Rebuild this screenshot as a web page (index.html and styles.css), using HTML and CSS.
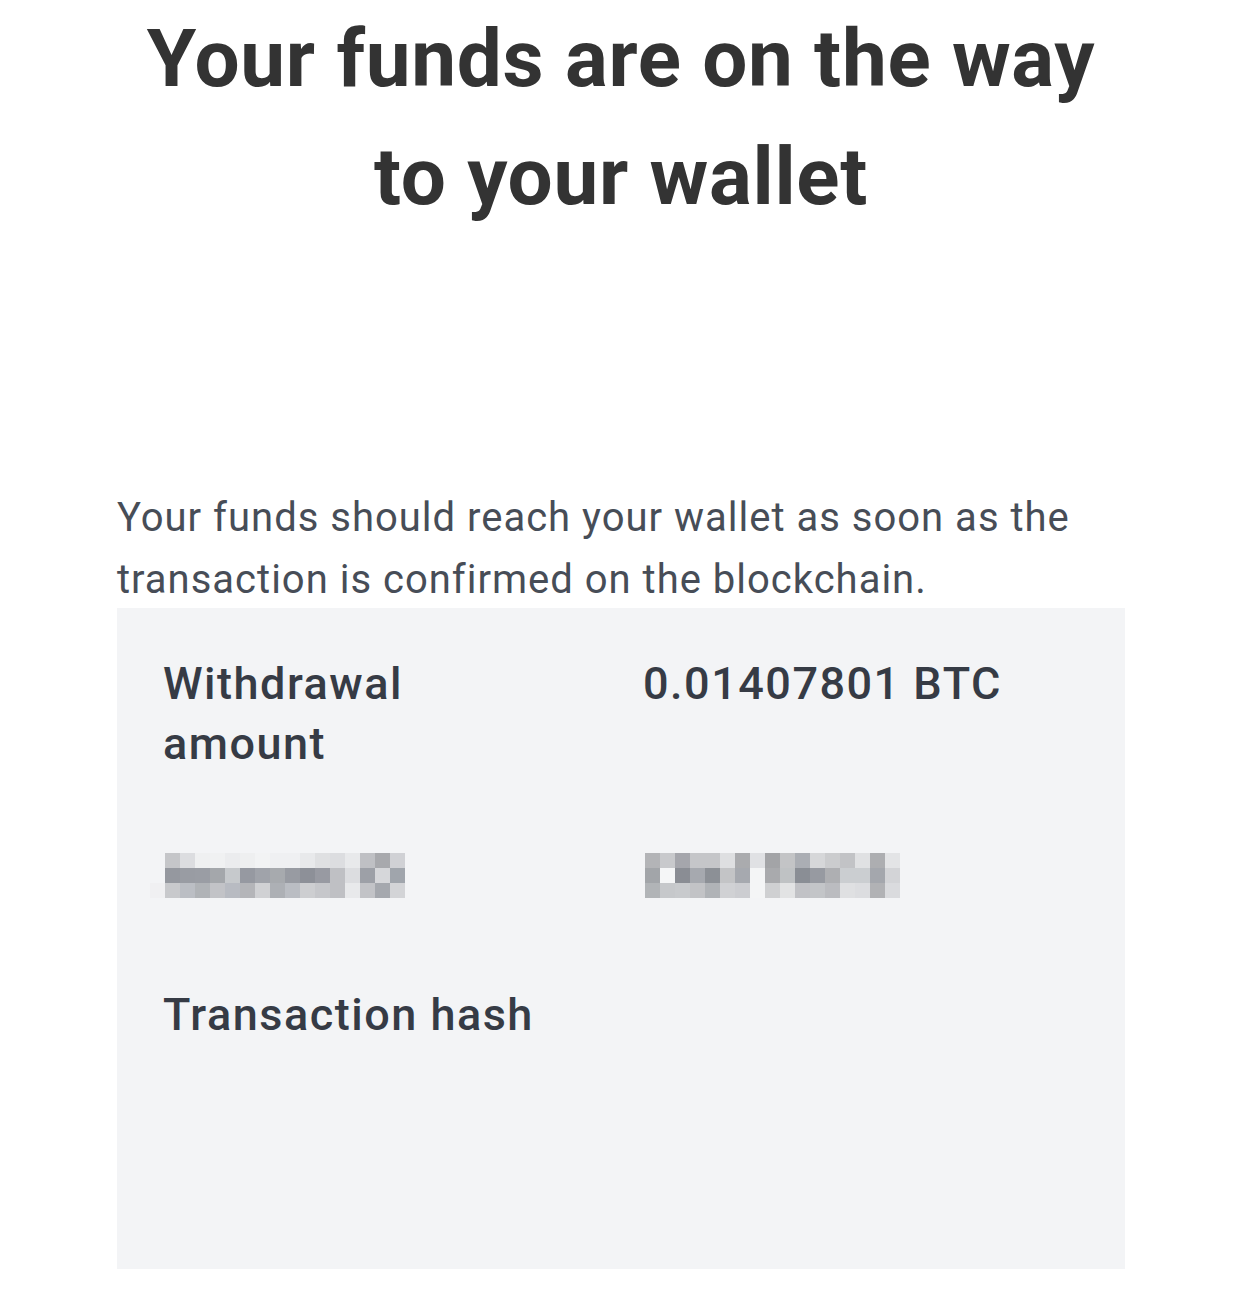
FILE: index.html
```html
<!DOCTYPE html>
<html lang="en">
<head>
    <meta charset="UTF-8">
    <meta name="viewport" content="width=device-width, initial-scale=1.0">
    <title>Withdrawal submitted</title>
    <link rel="stylesheet" href="styles.css">
</head>
<body>

    <div class="container">
        <h1 class="title">Your funds are on the way to your wallet</h1>

        <p class="intro">Your funds should reach your wallet as soon as the transaction is confirmed on the blockchain.</p>

        <div class="details">
            <div class="row">
                <div class="label">Withdrawal amount</div>
                <div class="value">0.01407801 BTC</div>
            </div>
            <div class="row">
                <div class="label"><div class="pixels pixels-left" id="blurLabel"></div></div>
                <div class="value"><div class="pixels" id="blurValue"></div></div>
            </div>
            <div class="row">
                <div class="label">Transaction hash</div>
                <div class="value"></div>
            </div>
        </div>
    </div>

    <script>
        // Blurred (pixelated) address, one colour per 15px cell
        const blurLabel = [
            ['', 'c5c6c9', 'dcdde0', 'eff0f1', 'f0f1f2', 'ebecee', 'eeeff0', 'f2f3f4', 'eff0f2', 'eff0f2', 'e8e9eb', 'dfe0e2', 'dcdde0', 'e8e9eb', 'bfc0c4', 'a8a9ad', 'd0d1d5'],
            ['', '95989f', '999ca3', '9a9da4', 'a4a7ab', 'c6c9cc', '9699a1', 'a0a3aa', 'a7aaae', '989ba2', '8d9098', '989aa2', 'bfc0c4', 'dcdde0', '9da0a7', 'd6d7da', 'a0a5ac'],
            ['f0f0f2', 'c8c9cc', 'bbbec4', 'b0b3b7', 'c2c3c7', 'b8bbc2', 'b4b5b9', 'd0d1d4', 'adb0b5', 'babdc3', 'cdced1', 'c6c7cb', 'bfc0c4', 'e8e9eb', 'c2c3c7', 'a5a8ae', 'd3d4d7']
        ];
        const blurValue = [
            ['b3b4b7', 'c8c9cc', 'a5a6ac', 'c5c6c9', 'c5c6c9', 'dedfe1', 'aaabae', 'e0e1e4', 'a3a4a7', 'c3c4c6', 'abaeb4', 'd6d7d9', 'cbccce', 'c2c3c6', 'e0e1e3', 'adaeb1', 'e3e4e6'],
            ['a2a5a9', 'f5f6f7', '8a8d94', 'a6a9af', '8c9096', 'c3c4c6', 'a6a9af', 'f4f5f6', 'a9aaad', 'bfc2c4', '8a8e95', '979aa1', 'aeafb2', 'cbced1', 'cbced1', 'a4a7ad', 'd3d4d7'],
            ['b1b4b7', 'c6c8cb', 'c8cacd', 'c2c3c6', 'b0b3b7', 'd0d1d4', 'cccdd1', 'f4f5f6', 'cfd0d2', 'e2e3e4', 'c1c2c6', 'c3c5c8', 'bbbcc0', 'dfe0e2', 'dcdde0', 'b1b2b5', 'dadbde']
        ];

        function drawPixels(id, rows) {
            const box = document.getElementById(id);
            rows.forEach(row => {
                row.forEach(color => {
                    const cell = document.createElement('span');
                    if (color) cell.style.backgroundColor = '#' + color;
                    box.appendChild(cell);
                });
            });
        }

        drawPixels('blurLabel', blurLabel);
        drawPixels('blurValue', blurValue);
    </script>

</body>
</html>
```

FILE: styles.css
```css
/* page */
body {
    font-family: Roboto, "Noto Sans", sans-serif;
    background-color: #ffffff;
    margin: 0;
    padding: 0;
}

.container {
    margin: 0 117px;
}

.title {
    margin: 0;
    padding: 0;
    font-size: 80px;
    line-height: 118px;
    font-weight: 700;
    letter-spacing: 0.7px;
    text-align: center;
    color: #333333;
}

.intro {
    margin: 251px 0 0;
    font-size: 40px;
    line-height: 62px;
    font-weight: 400;
    letter-spacing: 1px;
    color: #474d57;
}

/* details card */
.details {
    margin-top: -3px;
    padding: 46px 46px 224px;
    background-color: #f3f4f6;
}

.row {
    display: grid;
    grid-template-columns: 480px 1fr;
    font-size: 45px;
    line-height: 60px;
    font-weight: 500;
    letter-spacing: 1.5px;
    color: #363b45;
}

.row + .row {
    margin-top: 76px;
}

.label {
    padding-right: 90px;
}

.pixels {
    display: grid;
    grid-template-columns: repeat(17, 15px);
    grid-auto-rows: 15px;
    padding: 3px 0 11px 2px;
}

.pixels-left {
    margin-left: -13px;
    padding-left: 0;
}
```
